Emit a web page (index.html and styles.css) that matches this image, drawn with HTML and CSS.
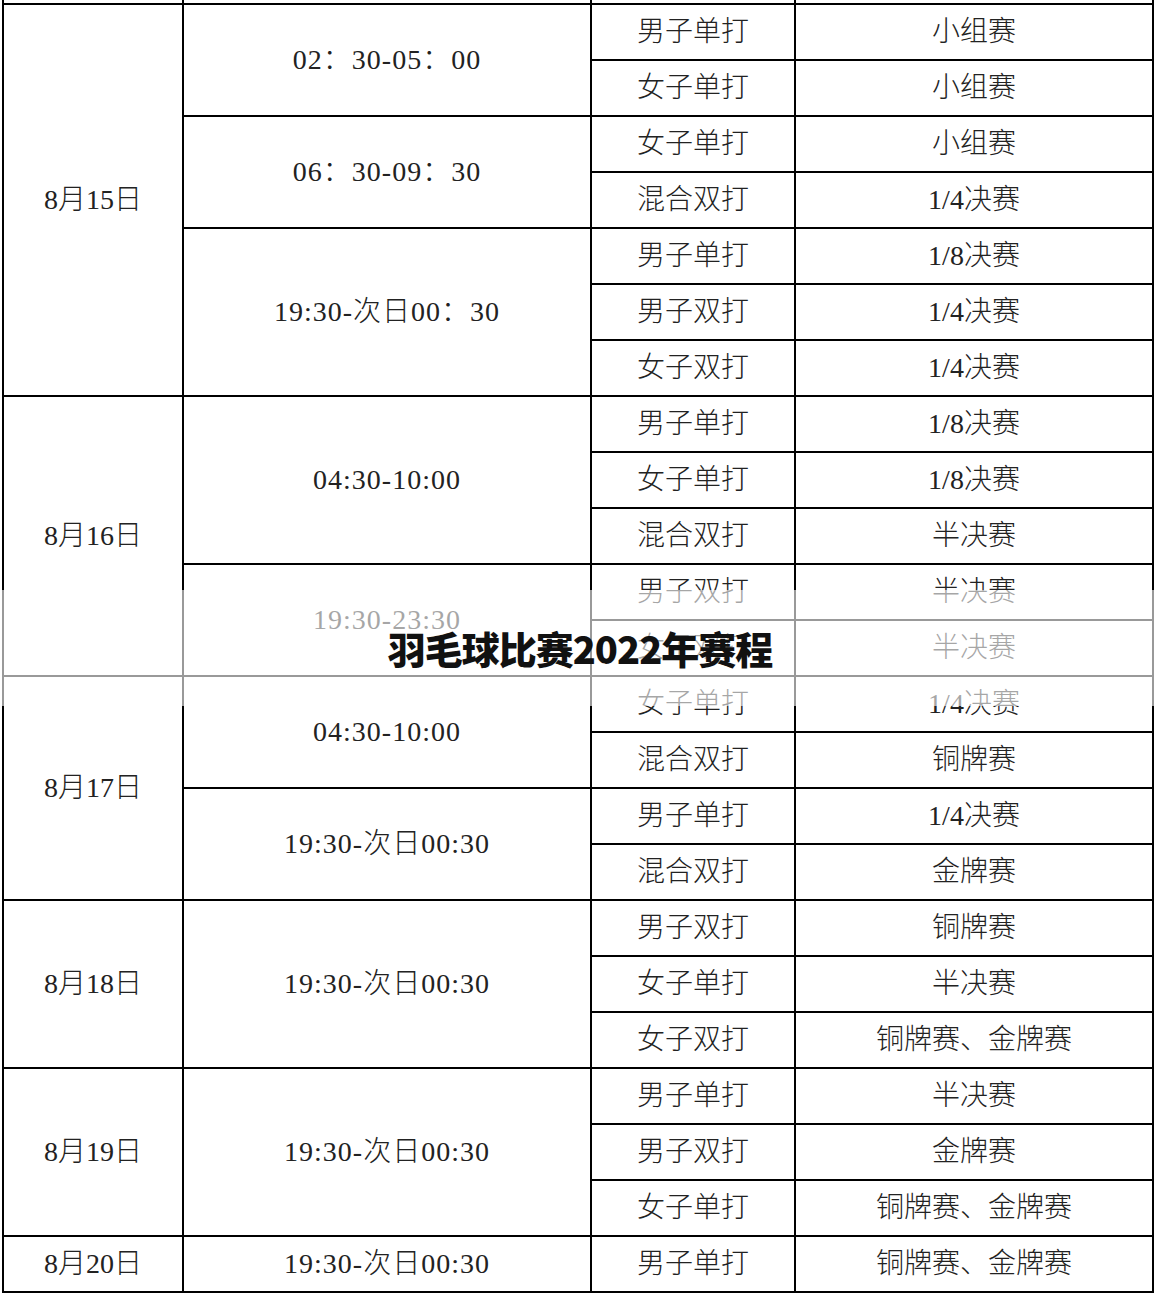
FILE: index.html
```html
<!DOCTYPE html>
<html lang="zh-CN">
<head>
<meta charset="utf-8">
<title>羽毛球比赛2022年赛程</title>
<link rel="stylesheet" href="styles.css">
</head>
<body>
<div class="page">
<table class="schedule">
  <colgroup>
    <col class="c-date"><col class="c-time"><col class="c-event"><col class="c-stage">
  </colgroup>
  <tr class="stub"><td></td><td></td><td></td><td></td></tr>

  <tr><td rowspan="7">8月15日</td><td class="time" rowspan="2">02：30-05：00</td><td>男子单打</td><td>小组赛</td></tr>
  <tr><td>女子单打</td><td>小组赛</td></tr>
  <tr><td class="time" rowspan="2">06：30-09：30</td><td>女子单打</td><td>小组赛</td></tr>
  <tr><td>混合双打</td><td>1/4决赛</td></tr>
  <tr><td class="time" rowspan="3">19:30-次日00：30</td><td>男子单打</td><td>1/8决赛</td></tr>
  <tr><td>男子双打</td><td>1/4决赛</td></tr>
  <tr><td>女子双打</td><td>1/4决赛</td></tr>

  <tr><td rowspan="5">8月16日</td><td class="time" rowspan="3">04:30-10:00</td><td>男子单打</td><td>1/8决赛</td></tr>
  <tr><td>女子单打</td><td>1/8决赛</td></tr>
  <tr><td>混合双打</td><td>半决赛</td></tr>
  <tr><td class="time" rowspan="2">19:30-23:30</td><td>男子双打</td><td>半决赛</td></tr>
  <tr><td>女子双打</td><td>半决赛</td></tr>

  <tr><td rowspan="4">8月17日</td><td class="time" rowspan="2">04:30-10:00</td><td>女子单打</td><td>1/4决赛</td></tr>
  <tr><td>混合双打</td><td>铜牌赛</td></tr>
  <tr><td class="time" rowspan="2">19:30-次日00:30</td><td>男子单打</td><td>1/4决赛</td></tr>
  <tr><td>混合双打</td><td>金牌赛</td></tr>

  <tr><td rowspan="3">8月18日</td><td class="time" rowspan="3">19:30-次日00:30</td><td>男子双打</td><td>铜牌赛</td></tr>
  <tr><td>女子单打</td><td>半决赛</td></tr>
  <tr><td>女子双打</td><td>铜牌赛、金牌赛</td></tr>

  <tr><td rowspan="3">8月19日</td><td class="time" rowspan="3">19:30-次日00:30</td><td>男子单打</td><td>半决赛</td></tr>
  <tr><td>男子双打</td><td>金牌赛</td></tr>
  <tr><td>女子单打</td><td>铜牌赛、金牌赛</td></tr>

  <tr><td>8月20日</td><td class="time">19:30-次日00:30</td><td>男子单打</td><td>铜牌赛、金牌赛</td></tr>
</table>

<div class="banner">
  <h1 class="banner-title">羽毛球比赛2022年赛程</h1>
</div>
</div>
</body>
</html>
```
FILE: styles.css
```css
html, body {
  margin: 0;
  padding: 0;
  background: #ffffff;
}

.page {
  position: relative;
  width: 1158px;
  height: 1298px;
  overflow: hidden;
}

.schedule {
  margin-left: 2px;
  border-collapse: separate;
  border-spacing: 0;
  table-layout: fixed;
  width: 1152px;
  border-left: 2px solid #000;
  font-family: "Liberation Serif", "Noto Sans CJK SC", serif;
  font-weight: 300;
  font-size: 28px;
  color: #222;
}

.c-date { width: 180px; }
.c-time { width: 408px; }
.c-event { width: 204px; }
.c-stage { width: 358px; }

.schedule td {
  height: 54px;
  padding: 0;
  text-align: center;
  vertical-align: middle;
  border-right: 2px solid #000;
  border-bottom: 2px solid #000;
  line-height: 54px;
  white-space: nowrap;
}

.schedule td[rowspan] {
  height: auto;
}

.schedule td.time {
  letter-spacing: 1px;
}

.schedule .stub td {
  height: 3px;
  line-height: 0;
  font-size: 0;
}

.banner {
  position: absolute;
  left: 0;
  top: 590px;
  width: 1158px;
  height: 116px;
  background: rgba(255, 255, 255, 0.6);
  display: flex;
  align-items: center;
  justify-content: center;
}

.banner-title {
  margin: 0 0 0 2px;
  font-family: "Noto Sans CJK SC", "Noto Sans", sans-serif;
  font-weight: 900;
  font-size: 38px;
  line-height: 1;
  color: #111;
  letter-spacing: -1px;
}
```
